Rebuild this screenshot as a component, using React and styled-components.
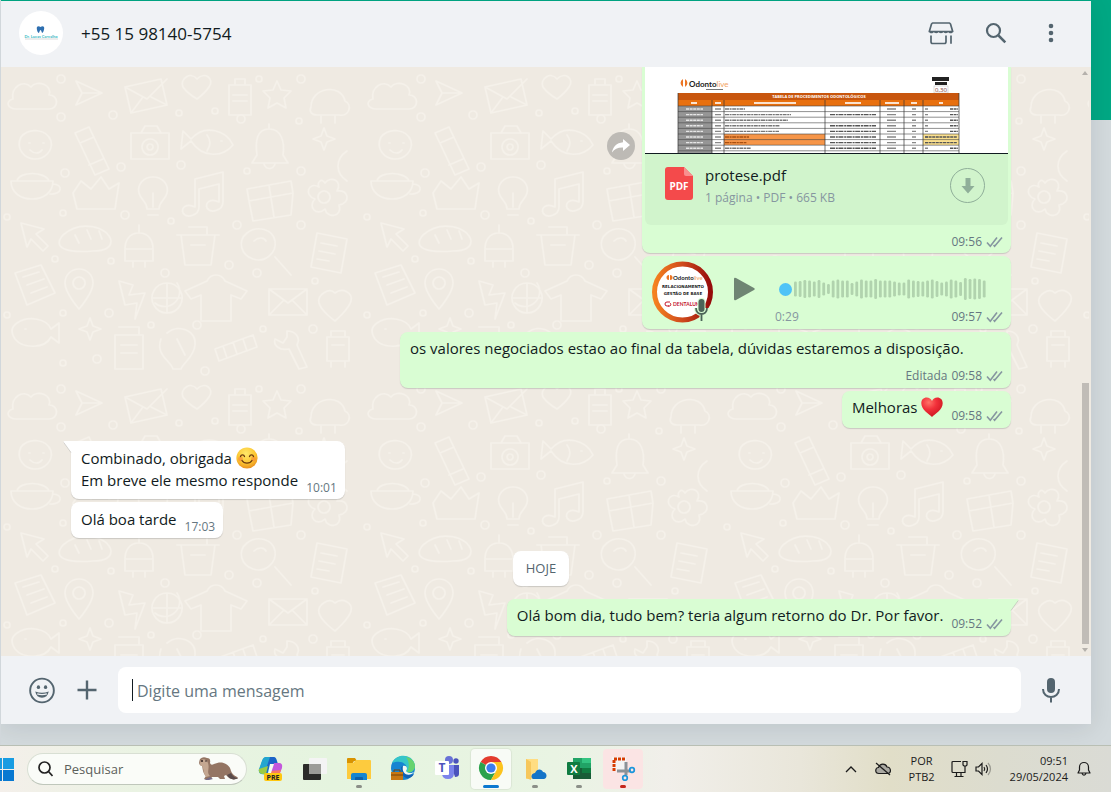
import React from "react";
import styled, { createGlobalStyle } from "styled-components";

const GlobalStyle = createGlobalStyle`
  * {
    box-sizing: border-box;
  }
  body {
    margin: 0;
    font-family: "Open Sans", "Noto Sans", sans-serif;
    color: #111b21;
  }
  button {
    background: none;
    border: 0;
    padding: 0;
    font: inherit;
    color: inherit;
    cursor: pointer;
  }
  svg {
    display: block;
  }
`;

const Desktop = styled.div`
  display: flex;
  flex-direction: column;
  height: 100vh;
`;

const Browser = styled.div`
  display: flex;
  flex: 1;
  min-height: 0;
  overflow: hidden;
  padding: 1px 20px 21px 0;
  border-left: 1px solid #d1d7db;
  background: linear-gradient(#00a884 120px, #d3dadd 120px);
`;

const Window = styled.main`
  display: flex;
  flex-direction: column;
  flex: 1;
  min-width: 0;
  background: #f0f2f5;
  box-shadow: 0 4px 24px rgba(11, 20, 26, 0.1);
`;

const Header = styled.header`
  display: flex;
  align-items: center;
  height: 66px;
  flex-shrink: 0;
  padding: 0 27px 2px 18px;
`;

const Title = styled.h1`
  flex: 1;
  margin: 2px 0 0 18px;
  font-size: 17px;
  font-weight: 400;
  line-height: 24px;
`;

const Actions = styled.div`
  display: flex;
  gap: 29px;
  color: #54656f;
`;

const IconButton = styled.button`
  display: flex;
  align-items: center;
  justify-content: center;
  width: 26px;
  height: 26px;
  color: #54656f;
`;

const Chat = styled.section`
  display: grid;
  grid-template-columns: 1fr 8px;
  flex: 1;
  min-height: 0;
  overflow: hidden;
  padding-right: 2px;
  background: #efeae2;
`;

const Wallpaper = styled.svg`
  grid-area: 1 / 1 / 2 / 3;
  width: 100%;
  height: 100%;
  min-height: 0;
`;

const Messages = styled.div`
  grid-area: 1 / 1;
  display: flex;
  flex-direction: column;
  align-items: flex-end;
  gap: 3px;
  min-height: 0;
  padding: 0 70px 20px;
`;

const ScrollBar = styled.div`
  grid-area: 1 / 2;
  display: flex;
  flex-direction: column;
  align-items: center;
  justify-content: space-between;
  padding: 3px 0;
`;

const ScrollRail = styled.div`
  display: flex;
  flex: 1;
  align-items: flex-end;
  margin: 2px 0 4px;
`;

const ScrollThumb = styled.div`
  width: 7px;
  height: 46%;
  background: #c0bcb7;
`;

const Bubble = styled.article`
  position: relative;
  display: flex;
  flex-direction: ${p => (p.stacked ? "column" : "row")};
  align-items: flex-end;
  gap: 8px;
  width: ${p => (p.stacked ? "65%" : "auto")};
  max-width: 65%;
  margin-top: ${p => (p.first ? "10px" : "0")};
  align-self: ${p => (p.incoming ? "flex-start" : "flex-end")};
  padding: 5px 8px 5px 10px;
  border-radius: 8px;
  border-top-left-radius: ${p => (p.first && p.incoming ? "0" : "8px")};
  border-top-right-radius: ${p => (p.first && !p.incoming ? "0" : "8px")};
  background: ${p => (p.incoming ? "#fff" : "#d9fdd3")};
  box-shadow: 0 1px 1px rgba(11, 20, 26, 0.16);
`;

const IncomingBubble = styled(Bubble)`
  padding: 6px 8px 4px 10px;
`;

const Text = styled.p`
  align-self: flex-start;
  margin: 0 0 ${p => p.bottom || "5px"};
  font-size: 15px;
  line-height: 22px;
`;

const Emoji = styled.svg`
  display: inline-block;
  width: 22px;
  height: 22px;
  vertical-align: top;
`;

const MetaRow = styled.div`
  display: flex;
  align-items: center;
  gap: 4px;
  flex-shrink: 0;
  color: #667781;
  font-size: 12px;
  line-height: 15px;
`;

const Tail = styled.svg`
  position: absolute;
  top: 0;
  left: ${p => (p.$incoming ? "-8px" : "auto")};
  right: ${p => (p.$incoming ? "auto" : "-8px")};
`;

const DocumentRow = styled.div`
  display: flex;
  align-items: center;
  gap: 7px;
`;

const Forward = styled.button`
  display: flex;
  align-items: center;
  justify-content: center;
  width: 28px;
  height: 28px;
  margin-bottom: 28px;
  border-radius: 50%;
  background: #bdbab5;
  color: #fff;
`;

const DocumentBubble = styled.article`
  width: 369px;
  padding: 0 3px 4px;
  border-radius: 0 0 8px 8px;
  background: #d9fdd3;
  box-shadow: 0 1px 1px rgba(11, 20, 26, 0.16);
`;

const Preview = styled.svg`
  width: 100%;
  height: 87px;
  background: #fff;
  border-bottom: 1px solid #111b21;
`;

const FileCard = styled.div`
  display: flex;
  align-items: flex-start;
  height: 71px;
  padding: 13px 23px 0 20px;
  border-radius: 0 0 6px 6px;
  background: #d1f4cc;
`;

const FileInfo = styled.div`
  flex: 1;
  margin-left: 12px;
`;

const FileName = styled.div`
  font-size: 15px;
  line-height: 20px;
  margin-top: -2px;
`;

const FileMeta = styled.div`
  margin-top: 5px;
  color: #8696a0;
  font-size: 12px;
  line-height: 16px;
`;

const Download = styled.button`
  display: flex;
  align-items: center;
  justify-content: center;
  width: 35px;
  height: 35px;
  margin-top: 1px;
  border: 1px solid #8fae99;
  border-radius: 50%;
  color: #8fae99;
`;

const DocumentFooter = styled.div`
  display: flex;
  justify-content: flex-end;
  padding: 9px 5px 0 0;
`;

const AudioBubble = styled(Bubble)`
  align-items: flex-start;
  gap: 20px;
  width: 369px;
`;

const PlayButton = styled.button`
  margin-top: 16px;
`;

const Track = styled.div`
  display: flex;
  flex-direction: column;
  flex: 1;
  justify-content: flex-end;
  gap: 8px;
  height: 63px;
`;

const WaveStack = styled.div`
  display: grid;
  padding: 0 15px 0 4px;

  & > * {
    grid-area: 1 / 1;
  }
`;

const Seek = styled.input`
  appearance: none;
  width: 100%;
  height: 24px;
  margin: 0;
  background: transparent;

  &::-webkit-slider-thumb {
    appearance: none;
    width: 13px;
    height: 13px;
    border-radius: 50%;
    background: #4fc3f7;
  }
`;

const TrackFooter = styled.div`
  display: flex;
  justify-content: space-between;
  color: #8696a0;
  font-size: 12px;
  line-height: 15px;
`;

const DayPill = styled.div`
  align-self: center;
  margin: 10px 0 0;
  padding: 0 13px;
  border-radius: 8px;
  background: #fff;
  box-shadow: 0 1px 1px rgba(11, 20, 26, 0.16);
  color: #54656f;
  font-size: 13px;
  line-height: 35px;
`;

const Composer = styled.footer`
  display: flex;
  align-items: center;
  height: 68px;
  flex-shrink: 0;
  gap: 19px;
  padding: 0 27px 0 28px;
`;

const InputBox = styled.label`
  display: flex;
  align-items: center;
  flex: 1;
  height: 46px;
  margin: 0 -2px 0 -1px;
  padding: 0 14px;
  border-radius: 8px;
  background: #fff;
`;

const Caret = styled.span`
  width: 1px;
  height: 22px;
  margin-right: 4px;
  background: #111b21;
`;

const MessageInput = styled.input`
  flex: 1;
  min-width: 0;
  border: 0;
  padding: 1px 0 0;
  outline: 0;
  background: none;
  font-family: inherit;
  font-size: 16px;

  &::placeholder {
    color: #667781;
    opacity: 1;
  }
`;

const TaskBar = styled.nav`
  display: flex;
  align-items: center;
  height: 47px;
  flex-shrink: 0;
  border-top: 1px solid #b9bfb4;
  background: linear-gradient(
    90deg,
    #f4efea 0%,
    #eaf3e3 12%,
    #e5f4df 30%,
    #e9f4e3 50%,
    #f1efea 60%,
    #e9e6da 72%,
    #e1dec8 80%,
    #dcdccf 90%,
    #dadbd5 100%
  );
`;

const StartButton = styled.button`
  width: 14px;
  margin-right: 13px;
`;

const SearchBox = styled.label`
  display: flex;
  align-items: center;
  width: 220px;
  height: 32px;
  margin-right: 4px;
  padding: 0 7px 0 10px;
  border: 1px solid #d8dfd3;
  border-bottom-color: #bfc7bb;
  border-radius: 16px;
  background: #fafcf8;
`;

const SearchInput = styled.input`
  flex: 1;
  min-width: 0;
  margin-left: 11px;
  padding: 0;
  border: 0;
  outline: 0;
  background: none;
  font-family: inherit;
  font-size: 13px;

  &::placeholder {
    color: #5c5f5b;
    opacity: 1;
  }
`;

const Apps = styled.div`
  display: flex;
  flex: 1;
  gap: 4px;
`;

const AppButton = styled.button`
  display: flex;
  flex-direction: column;
  align-items: center;
  justify-content: flex-end;
  gap: 4px;
  width: 40px;
  height: 40px;
  border-radius: 4px;
  background: ${p => p.fill || "none"};
  box-shadow: ${p => (p.active ? "0 0 1px 1px rgba(0, 0, 0, 0.06)" : "none")};

  &::after {
    content: "";
    width: ${p => (p.active ? "16px" : "6px")};
    height: 3px;
    margin-bottom: 1px;
    border-radius: 2px;
    background: ${p => p.mark || "transparent"};
  }
`;

const Tray = styled.div`
  display: flex;
  align-items: center;
  padding-right: 20px;
  color: #1b1b1b;
  font-size: 11px;
  line-height: 16px;
`;

const TrayItem = styled.button`
  display: flex;
  justify-content: center;
  margin-left: ${p => p.gap || "12px"};
  text-align: ${p => p.align || "center"};
`;

const Ticks = () => (
  <svg width="17" height="12" viewBox="0 0 17 12" fill="none" stroke="#8696a0" strokeWidth="1.6">
    <path d="M1 6.5l3.3 3.7L11 1.5M7.6 9l1 1.2L16 1.5" />
  </svg>
);

const Meta = ({ time, edited, received }) => (
  <MetaRow>
    {edited && <span>Editada</span>}
    <time>{time}</time>
    {!received && <Ticks />}
  </MetaRow>
);

const Heart = () => (
  <Emoji viewBox="0 0 22 22" role="img" aria-label="coração">
    <defs>
      <radialGradient id="heart" cx=".35" cy=".25" r=".8">
        <stop offset="0" stopColor="#ff7468" />
        <stop offset=".45" stopColor="#f2303a" />
        <stop offset="1" stopColor="#c9141f" />
      </radialGradient>
    </defs>
    <path
      d="M11 21C8 17.800.3 13.800.3 7.200.3 3.800 2.600 1.600 5.700 1.600c2.500 0 4.300 1.300 5.300 3.500 1-2.200 2.800-3.500 5.300-3.500 3.100 0 5.400 2.200 5.400 5.600C21.700 13.800 14 17.800 11 21z"
      fill="url(#heart)"
    />
  </Emoji>
);

const Smile = () => (
  <Emoji viewBox="0 0 22 22" role="img" aria-label="sorriso">
    <defs>
      <radialGradient id="smile" cx=".45" cy=".3" r=".75">
        <stop offset="0" stopColor="#ffe96b" />
        <stop offset=".6" stopColor="#fcc531" />
        <stop offset="1" stopColor="#e5851b" />
      </radialGradient>
    </defs>
    <circle cx="11" cy="11" r="10.600" fill="url(#smile)" />
    <circle cx="4.500" cy="12" r="2.400" fill="#f5803c" opacity=".55" />
    <circle cx="17.500" cy="12" r="2.400" fill="#f5803c" opacity=".55" />
    <path
      d="M4.500 9.500c.6-2.200 3.400-2.200 4 0M13.500 9.500c.6-2.200 3.400-2.200 4 0M6 13.500c2 3.600 8 3.600 10 0"
      fill="none"
      stroke="#6b3a10"
      strokeWidth="1.300"
      strokeLinecap="round"
    />
  </Emoji>
);

const BubbleTail = ({ incoming }) => (
  <Tail $incoming={incoming} width="9" height="13" viewBox="0 0 9 13">
    <path
      d={incoming ? "M9 0H1.500Q0 0 .8 1.500L9 12.500z" : "M0 0H7.500Q9 0 8.200 1.500L0 12.500z"}
      fill={incoming ? "#fff" : "#d9fdd3"}
    />
    <path
      d={incoming ? "M.8 1.500L8 11.500" : "M8.200 1.500L1 11.500"}
      fill="none"
      stroke="#0b141a"
      strokeOpacity=".14"
    />
  </Tail>
);

const Doodles = () => (
  <Wallpaper aria-hidden="true">
    <defs>
      <pattern id="doodles" width="360" height="310" patternUnits="userSpaceOnUse">
        <g fill="none" stroke="#f5f1ea" strokeWidth="1.700" strokeLinecap="round" strokeLinejoin="round">
          <path d="M12 32c-2-12 10-20 18-12 6-8 22-2 18 8 10 0 10 14 0 14H16c-10 0-12-8-4-10z" />
          <path d="M75 14l26 12-26 12 6-12zM81 26h20" />
          <path d="M124 20l36-8 6 26-36 8zM124 20l22 12 20-20M130 46l12-16M166 38l-16-8" />
          <path d="M196 12c8-8 18 0 12 8-4 6-12 12-12 12s-10-6-14-12c-4-8 8-16 14-8z" />
          <path d="M228 18h22v30h-22zM234 18v-6h10v6M232 28h14M232 34h14" />
          <path d="M276 14l4 9 10 1-7 7 2 10-9-5-9 5 2-10-7-7 10-1z" />
          <path d="M310 40c0-20 30-24 34-6 8 4 4 16-6 14h-22c-6 0-8-4-6-8zM320 48v8M334 48v8" />
          <path d="M20 70c8-10 26-8 30 4 2 10-6 18-16 18S14 82 20 70zM28 76h1M42 76h1M29 83c4 4 9 4 12 0" />
          <path d="M74 66l14-6 20 42-14 6zM79 76l14-6M88 98l14-6" />
          <path d="M130 66h38v26h-38zM140 66l4-7h12l4 7M149 72a8 8 0 1 0 .1 0zM149 77a3 3 0 1 0 .1 0" />
          <path d="M190 72c14-16 36-8 42 6-10 12-30 14-42-4l-10 8 2-18zM220 74h1M206 68c4 5 4 10 0 16" />
          <path d="M268 62c-12 0-14 12-12 26l-5 8h36l-5-8c2-14-2-26-14-26zM263 97c2 6 9 6 11 0M268 62v-5" />
          <path d="M312 72l8 3 3 8 3-8 8-3-8-3-3-8-3 8z" />
          <path d="M346 84c-12 8-12 22 0 30" />
          <path d="M10 114h42c0 12-10 18-21 18S10 126 10 114zM16 114c2-10 28-10 32 0M52 117c10 0 10 11-3 10" />
          <path d="M72 126l8-12 10 8 10-12 8 12 10-6-4 26H76z" />
          <path d="M152 110c10 0 16 8 14 16-2 8-8 8-8 16h-12c0-8-6-8-8-16-2-8 4-16 14-16zM147 148h10M152 126v14" />
          <path d="M194 112v28c-8-4-14 0-12 6 4 6 16 2 16-6v-18l20-5v18c-8-4-14 0-12 6 4 6 16 2 16-6v-30z" />
          <path d="M246 122l44-8 2 12-44 8zM248 134l4 20 38-6 2-22M268 118l5 32" />
          <path d="M324 116c6-8 18-2 12 8 12-2 14 12 2 14 4 12-12 14-14 4-8 8-18-2-10-10-12-4-6-18 4-12-2-4 2-10 6-4zM323 124a6 6 0 1 0 .1 0" />
          <path d="M20 156l6 24 4-8 12 12 5-5-12-12 8-5z" />
          <path d="M62 168c18-16 46-8 48 6 0 8-8 10-18 10-24 2-42-2-30-16zM74 168l4 8M86 163l4 9M98 164l3 8" />
          <path d="M138 166c-10 0-14 8-14 16h28c0-8-4-16-14-16zM138 166v-8M124 182v12h28v-12M132 194v6M144 194v6" />
          <path d="M180 168h34l-4 30h-26zM176 168h42M188 160h18v8M190 178h14" />
          <path d="M246 166c10-8 26-4 28 8s-10 22-22 18-16-18-6-26zM274 190l16 18M253 174c4-4 10-4 12 0" />
          <path d="M316 166l30 6-6 34-30-6zM320 176l16 3M318 184l16 3M316 192l12 2" />
          <path d="M14 206l26-8 14 28-28 12zM22 210l16-5M26 218l17-6M30 226l16-6" />
          <path d="M78 202c8 0 14 6 14 14 0 10-14 26-14 26s-14-16-14-26c0-8 6-14 14-14zM78 210a6 6 0 1 0 .1 0" />
          <path d="M118 214l14 4-4 10 16-2-10 26 2-16-12 2z" />
          <path d="M166 216a15 15 0 1 0 .1 0zM176 216a15 15 0 0 1-22 20M151 231h30M166 216v30" />
          <path d="M206 214c4-8 14-8 18 0l22 10-6 8-10-4v26h-30v-26l-10 4-6-8z" />
          <path d="M268 222h38v26h-38zM268 222l19 14 19-14M268 248l14-14M306 248l-14-14" />
          <path d="M334 226c8-6 18 0 16 8s-16 20-16 20-14-10-16-18 10-16 16-10z" />
          <path d="M16 256c12-8 30-4 34 6l8-6v20l-8-6c-6 12-28 12-36 2-4-6-4-12 2-16zM24 262h1" />
          <path d="M78 262l8 3 3 8 3-8 8-3-8-3-3-8-3 8z" />
          <path d="M114 268h28v34h-28zM118 260h20v8M120 278h16M120 286h16" />
          <path d="M166 266c12-10 30-2 28 12-1 12-12 18-14 24h-8c-2-8-18-14-12-30M176 272l8 16" />
          <path d="M214 282l38-14 4 12-38 14zM222 279l4 12M232 275l4 12M242 272l4 12" />
          <path d="M286 264c8 0 14 6 10 14l10 22-8 2-10-20c-10 2-16-4-14-10l8 4 4-6z" />
          <path d="M326 270h22v24h-22zM330 270v-6h14v6M330 294v6M344 294v6M331 278h12" />
          <g>
            {[
              [60, 12], [112, 48], [178, 46], [214, 44], [258, 12], [300, 12], [60, 50], [64, 106], [120, 100],
              [180, 98], [240, 52], [246, 104], [298, 54], [300, 104], [236, 158], [170, 154], [124, 148], [62, 146],
              [6, 150], [110, 194], [164, 206], [228, 198], [300, 158], [54, 192], [108, 246], [196, 258], [256, 206],
              [314, 214], [62, 246], [150, 258], [262, 262], [312, 262], [62, 296], [204, 304], [96, 292], [6, 248]
            ].map(([cx, cy]) => (
              <circle key={cx + "-" + cy} cx={cx} cy={cy} r={cx % 4 ? 3 : 4} />
            ))}
          </g>
        </g>
      </pattern>
    </defs>
    <rect width="100%" height="100%" fill="url(#doodles)" />
  </Wallpaper>
);

const columns = [67, 79, 180, 235, 259, 278];
const priceRows = [0, 1, 2, 3, 4, 5, 6, 7, 8];

const PricePreview = () => (
  <Preview viewBox="0 0 363 86" preserveAspectRatio="xMidYMin slice" role="img" aria-label="Tabela de procedimentos">
    <g fontFamily="Open Sans">
      <path d="M38 12a4.500 4.500 0 0 0 0 8zM40 12a4.500 4.500 0 0 1 0 8z" fill="#ec7625" />
      <text x="44" y="20" fontSize="8" fontWeight="700" fontFamily="Lato" fill="#222">
        Odonto<tspan fill="#f3a261" fontWeight="400">live</tspan>
      </text>
      <rect x="61" y="22" width="17" height="1" fill="#777" />
      <rect x="287" y="10" width="17" height="4" fill="#222" />
      <rect x="290" y="15" width="12" height="3" fill="#222" />
      <rect x="289" y="19" width="14" height="7" fill="#fff" stroke="#bbb" strokeWidth=".5" />
      <text x="296" y="25" fontSize="6" textAnchor="middle" fill="#733">0,30</text>
      <rect x="33" y="26" width="281" height="7" fill="#c8560e" />
      <text x="174" y="31" fontSize="4" fontWeight="700" textAnchor="middle" fill="#fff">
        TABELA DE PROCEDIMENTOS ODONTOLÓGICOS
      </text>
      <rect x="33" y="33" width="281" height="6" fill="#e8700f" />
      <g fill="#fbe3cf">
        <rect x="46" y="35" width="6" height="2" />
        <rect x="70" y="35" width="6" height="2" />
        <rect x="109" y="35" width="42" height="2" />
        <rect x="200" y="35" width="16" height="2" />
        <rect x="240" y="35" width="14" height="2" />
        <rect x="266" y="35" width="6" height="2" />
        <rect x="294" y="35" width="4" height="2" />
      </g>
      <rect x="33" y="39" width="34" height="47" fill="#969696" />
      <rect x="79" y="67" width="101" height="11" fill="#f69548" />
      <rect x="278" y="67" width="36" height="11" fill="#fbe08e" />
      {priceRows.map(i => {
        const y = 39 + i * 5.6;
        const wide = [20, 66, 63, 55, 54, 24, 22, 26, 0][i];
        return (
          <g key={i} fill="none" strokeWidth="1.400">
            <path d={`M33 ${y}H314`} stroke="#444" strokeWidth=".6" />
            <path d={`M41 ${y + 3}h17`} stroke="#e6e6e6" strokeDasharray="3 .6" />
            <path d={`M70 ${y + 3}h6M242 ${y + 3}h9M267 ${y + 3}h4M280 ${y + 3}h3`} stroke="#888" />
            <path d={`M80 ${y + 3}h${wide}`} stroke={i > 4 && i < 7 ? "#a84f10" : "#777"} strokeDasharray="4 .6 2 .6" />
            {(i === 1 || i > 2) && <path d={`M185 ${y + 3}h46`} stroke="#555" strokeDasharray="5 .8 2 .6" />}
            <path
              d={i === 5 || i === 6 ? `M280 ${y + 3}h32` : `M305 ${y + 3}h8`}
              stroke="#555"
              strokeDasharray="3 .6"
            />
          </g>
        );
      })}
      {columns.map(x => (
        <path key={x} d={`M${x} 33V86`} stroke="#333" strokeWidth=".7" />
      ))}
      <path d="M33 26V86M314 26V86" stroke="#333" strokeWidth=".7" />
    </g>
  </Preview>
);

const bars = [
  15, 16, 18, 17, 15, 18, 13, 10, 17, 19, 17, 17, 12, 15, 19, 17, 17, 20, 17, 17, 17, 15, 13, 13, 19, 17, 16, 15, 17,
  19, 16, 13, 15, 19, 17, 14, 22, 20, 21, 20, 17
];

const Waveform = () => (
  <svg width="208" height="24" viewBox="0 0 208 24" aria-hidden="true">
    {bars.map((h, i) => (
      <rect key={i} x={15 + i * 4.72} y={12 - h / 2} width="2.800" height={h} rx="1.300" fill="#b1d3ae" />
    ))}
  </svg>
);

const VoiceAvatar = () => (
  <svg width="62" height="62" viewBox="0 0 62 62" role="img" aria-label="Odontolive">
    <defs>
      <linearGradient id="ring">
        <stop offset="0" stopColor="#f58220" />
        <stop offset=".5" stopColor="#cf4a1c" />
        <stop offset="1" stopColor="#960b0b" />
      </linearGradient>
    </defs>
    <circle cx="30.500" cy="31" r="28" fill="#fff" stroke="url(#ring)" strokeWidth="5" />
    <path d="M17 14a2.500 2.500 0 0 0 0 5zM18 14a2.500 2.500 0 0 1 0 5z" fill="#ec7625" />
    <text x="21" y="19" fontSize="6" fontWeight="700" fontFamily="Lato" fill="#222">
      Odonto<tspan fill="#f3a261" fontWeight="400">live</tspan>
    </text>
    <g fontFamily="DejaVu Sans" fontWeight="700" fontSize="4" textAnchor="middle" fill="#222">
      <text x="31" y="27">RELACIONAMENTO</text>
      <text x="31" y="34">GESTÃO DE BASE</text>
    </g>
    <path d="M18 41h-3a1.800 1.800 0 0 0 0 4h2M16 45h2a1.800 1.800 0 0 0 0-3" fill="none" stroke="#c4142b" />
    <text x="21" y="45" fontSize="5" fontWeight="700" fontFamily="Lato" fill="#c4142b">DENTALUNI</text>
    <path d="M44 47c0 8 11 8 11 0M49.500 53v7" fill="none" stroke="#d9fdd3" strokeWidth="4" />
    <rect x="45.500" y="37" width="8" height="15" rx="4" fill="#d9fdd3" />
    <path d="M44 47c0 8 11 8 11 0M49.500 53v7" fill="none" stroke="#4c6458" strokeWidth="1.800" />
    <rect x="46.500" y="38" width="6" height="13" rx="3" fill="#4c6458" />
  </svg>
);

const ContactAvatar = () => (
  <svg width="44" height="44" viewBox="0 0 44 44" role="img" aria-label="Dr. Lucas Carvalho">
    <circle cx="22" cy="22" r="22" fill="#fff" />
    <path
      d="M18 16c1-1.500 2.500-.5 3.500 0 1-.5 2.500-1.500 3.500 0 .8 2-1 6-1.700 6S22.500 19 21.500 19s-1 3-1.800 3S17.200 18 18 16z"
      fill="#2e6fb0"
    />
    <rect x="6" y="27" width="33" height="2" fill="#ececec" />
    <text x="22" y="27" fontSize="4" fontWeight="900" fontFamily="Lato" textAnchor="middle" fill="#4cbfc9">
      Dr. Lucas Carvalho
    </text>
  </svg>
);

const MicIcon = () => (
  <svg width="20" height="26" viewBox="0 0 20 26">
    <rect x="6" y="1" width="8" height="15" rx="4" fill="currentColor" />
    <path d="M2 12c0 10.500 16 10.500 16 0M10 20v5.500" fill="none" stroke="currentColor" strokeWidth="2" />
  </svg>
);

const HeaderActions = () => (
  <Actions>
    <IconButton aria-label="Catálogo">
      <svg width="26" height="24" viewBox="0 0 26 24" fill="none" stroke="currentColor" strokeWidth="1.700">
        <path d="M4.500 2h17l1 1 2.200 7.500H1.300L3.500 3z" strokeLinejoin="round" />
        <path
          d="M1 10c0 3 4.800 3 4.800.2 0 2.600 4.800 2.600 4.800 0 0 2.600 4.800 2.600 4.800 0 0 2.600 4.800 2.600 4.800 0 0 2.800 4.900 2.800 4.900-.2z"
          fill="currentColor"
          stroke="none"
        />
        <path d="M3 14.500v6.300q0 1.700 1.700 1.700h11.600q1.700 0 1.700-1.700v-6.300M23 14.500v8.300" />
      </svg>
    </IconButton>
    <IconButton aria-label="Pesquisar">
      <svg width="24" height="24" viewBox="0 0 24 24" fill="none" stroke="currentColor">
        <circle cx="9.500" cy="9.500" r="6.500" strokeWidth="2.200" />
        <path d="M14.500 14.500l6.800 6.800" strokeWidth="2.500" />
      </svg>
    </IconButton>
    <IconButton aria-label="Mais opções">
      <svg width="6" height="20" viewBox="0 0 6 20" fill="currentColor">
        <circle cx="3" cy="3" r="2.300" />
        <circle cx="3" cy="10" r="2.300" />
        <circle cx="3" cy="17" r="2.300" />
      </svg>
    </IconButton>
  </Actions>
);

const DocumentMessage = () => (
  <DocumentRow>
    <Forward aria-label="Encaminhar">
      <svg width="20" height="16" viewBox="0 0 20 16" fill="currentColor">
        <path d="M12 1l7 6-7 6V9.500C7 9.300 3.500 10.800 1 14.500 1.800 9 5.500 5 12 4.300z" />
      </svg>
    </Forward>
    <DocumentBubble>
      <PricePreview />
      <FileCard>
        <svg width="28" height="33" viewBox="0 0 28 33" role="img" aria-label="PDF">
          <path d="M3 0h16l9 9v21q0 3-3 3H3q-3 0-3-3V3q0-3 3-3z" fill="#f44a4b" />
          <path d="M19 0l9 9h-7q-2 0-2-2z" fill="#f98f8e" />
          <text x="14" y="23" fontSize="10" fontWeight="700" fontFamily="Open Sans" textAnchor="middle" fill="#fff">
            PDF
          </text>
        </svg>
        <FileInfo>
          <FileName>protese.pdf</FileName>
          <FileMeta>1 página • PDF • 665 KB</FileMeta>
        </FileInfo>
        <Download aria-label="Baixar protese.pdf">
          <svg width="14" height="16" viewBox="0 0 14 16" fill="currentColor">
            <path d="M4.500 0h5v8H13.500L7 15.500.5 8H4.500z" />
          </svg>
        </Download>
      </FileCard>
      <DocumentFooter>
        <Meta time="09:56" />
      </DocumentFooter>
    </DocumentBubble>
  </DocumentRow>
);

const AudioMessage = () => (
  <AudioBubble>
    <VoiceAvatar />
    <PlayButton aria-label="Reproduzir">
      <svg width="21" height="24" viewBox="0 0 21 24">
        <path d="M0 2Q0 0 2 1l18 10q1.500 1 0 2L2 23q-2 1-2-1z" fill="#6f8573" />
      </svg>
    </PlayButton>
    <Track>
      <WaveStack>
        <Waveform />
        <Seek type="range" min="0" max="29" defaultValue="0" aria-label="Posição do áudio" />
      </WaveStack>
      <TrackFooter>
        <span>0:29</span>
        <Meta time="09:57" />
      </TrackFooter>
    </Track>
  </AudioBubble>
);

const apps = [
  {
    name: "Copilot",
    icon: (
      <>
        <path d="M7 3h7l4 1-4 12-4 4-7-1q-3-1-2-5L4 6q1-3 3-3z" fill="#22a5c8" />
        <path d="M8 2h8q2 0 3 4l1 3h-6l-2 1-3 9-5-4L5 5q1-3 3-3z" fill="#1b64c8" />
        <path d="M8 2h4l-4 12-7 2L4 6q1-4 4-4z" fill="#23a6cf" />
        <path d="M1 14l9-3-2 8H4q-4-1-3-5z" fill="#9bcb45" />
        <path d="M16 8h5q4 0 3 5l-2 5q-1 3-4 3h-7z" fill="#c457dc" />
        <path d="M13 16l10-1-2 5-9 1z" fill="#f47a64" />
        <path d="M12 9h4l-3 9h-3z" fill="#f5faf2" />
        <rect x="6" y="18" width="18" height="8" rx="2" fill="#ffc70f" />
        <text x="15" y="25" fontSize="7" fontWeight="700" textAnchor="middle" fill="#222">PRE</text>
      </>
    )
  },
  {
    name: "Visão de tarefas",
    icon: (
      <>
        <rect x="1" y="9" width="18" height="16" rx="1" fill="#2b2b29" />
        <rect x="7" y="3" width="18" height="16" rx="1" fill="#f4f4f4" />
        <path d="M7 9h12v10H7z" fill="#9c9c98" />
      </>
    )
  },
  {
    name: "Explorador de Arquivos",
    mark: "#8b8f88",
    icon: (
      <>
        <path d="M1 4q0-1 1-1h7l2 3h-3l-2 3H1z" fill="#d99300" />
        <path d="M1 8h6l3-3h14q1 0 1 1v18H1z" fill="#fdcb3e" />
        <path d="M5 25v-5q0-2 2-2h12q2 0 2 2v5z" fill="#1585d0" />
        <path d="M9 25v-2q0-1 1-1h6q1 0 1 1v2z" fill="#0c5fa8" />
      </>
    )
  },
  {
    name: "Edge",
    icon: (
      <>
        <circle cx="13" cy="13" r="12" fill="#1684d2" />
        <path d="M2 8C7-3 24-1 25 11c0 6-6 8-10 6 5-6-2-13-13-9z" fill="#36c5c9" />
        <path d="M16 2c6 1 9 5 9 10-1 4-4 6-8 5 3-5 2-11-1-15z" fill="#66d36e" />
        <path d="M11 12c4-3 7 3 4 6 3 3 6 2 9 1-3 6-13 7-13-7z" fill="#1261b4" />
        <path d="M13 11c4-1 5 3 3 5 2 3 6 2 8 1-4 5-13 3-11-6z" fill="#f3f8f2" />
        <path d="M1 17h12v8H1z" fill="#c77814" />
        <path d="M4 17v-2h6v2M1 20h12" stroke="#74420a" fill="none" />
      </>
    )
  },
  {
    name: "Teams",
    icon: (
      <>
        <circle cx="15" cy="5" r="4" fill="#6871d6" />
        <circle cx="22" cy="6" r="2.700" fill="#4b53bc" />
        <path d="M17 10h8v9q0 3-4 3z" fill="#4b53bc" />
        <path d="M8 10h12v8q0 6-6 6t-6-6z" fill="#7b83eb" />
        <rect x="1" y="6" width="14" height="14" rx="1" fill="#fff" />
        <text x="8" y="17" fontSize="12" fontWeight="700" textAnchor="middle" fill="#4b53bc">T</text>
      </>
    )
  },
  {
    name: "Chrome",
    active: true,
    fill: "#f8fbf6",
    mark: "#0b78d0",
    icon: (
      <>
        <path d="M13 13L2.600 7A12 12 0 0 1 23.400 7z" fill="#e33b2e" />
        <path d="M13 13L2.600 7A12 12 0 0 0 13 25l5-9z" fill="#2ba24c" />
        <path d="M13 7h10.400A12 12 0 0 1 13 25l5.200-9z" fill="#fcc31e" />
        <circle cx="13" cy="13" r="6" fill="#fff" />
        <circle cx="13" cy="13" r="4.600" fill="#3b7ded" />
      </>
    )
  },
  {
    name: "OneDrive",
    mark: "#8b8f88",
    icon: (
      <>
        <path d="M4 4h12v20H4z" fill="#ffdd82" />
        <path d="M4 4l5 3v18l-5-2z" fill="#f6c75c" />
        <path d="M11 24c-3-2-1-6 2-6 2-5 7-4 8-1 4 0 5 6 1 7z" fill="#1474c8" />
      </>
    )
  },
  {
    name: "Excel",
    mark: "#8b8f88",
    icon: (
      <>
        <path d="M7 3h18v21H7z" fill="#21a366" />
        <path d="M16 3h9v5h-9z" fill="#33c481" />
        <path d="M7 13h18v11H7z" fill="#185c37" />
        <path d="M16 13h9v5h-9z" fill="#107c41" />
        <rect x="1" y="7" width="13" height="13" rx="1" fill="#107c41" />
        <text x="8" y="18" fontSize="11" fontWeight="700" textAnchor="middle" fill="#fff">X</text>
      </>
    )
  },
  {
    name: "Ferramenta de Captura",
    fill: "#fbe4e4",
    mark: "#c5261c",
    icon: (
      <>
        <rect x="2" y="2" width="14" height="14" fill="#f4f4f4" />
        <path d="M4 16V4h12" fill="none" stroke="#d83b01" strokeWidth="3" strokeDasharray="3 1" />
        <path d="M16 7v9M7 16h14M16 15v5" fill="none" stroke="#8c9298" strokeWidth="3" />
        <circle cx="22" cy="15" r="2.300" fill="none" stroke="#1b96dc" strokeWidth="1.700" />
        <circle cx="15" cy="23" r="2.300" fill="none" stroke="#1b96dc" strokeWidth="1.700" />
      </>
    )
  }
];

const Otter = () => (
  <svg width="42" height="26" viewBox="0 0 42 26" aria-hidden="true">
    <path
      d="M3 3q3-3 7-1 4 0 3 5 1 3 4 1c8-4 16 0 17 7 2 5 6 5 7 7-4 3-9 1-12-3l-2 1 1 3h-5l-2-2h-6l-1 2H7l2-3c-4-4-3-8-4-10-4-1-3-4-2-7z"
      fill="#947563"
    />
    <path d="M4 4c3-2 6 0 7 3 2 6-2 9 2 13l-4 1c-3-4-2-8-4-11-3-1-2-4-1-6z" fill="#c4a791" />
    <path d="M34 17c2 4 5 5 7 5-4 3-9 1-11-3z" fill="#594b4b" />
    <circle cx="5" cy="5" r="1" fill="#2e2020" />
    <circle cx="9" cy="5" r=".8" fill="#2e2020" />
    <path d="M7 24l6-3 3 2-4 1z" fill="#766d86" />
  </svg>
);

const Dock = () => (
  <TaskBar>
    <StartButton aria-label="Iniciar">
      <svg width="14" height="23" viewBox="0 0 14 23">
        <path d="M0 0h2v11H0zM3 0h11v11H3z" fill="#189ce2" />
        <path d="M0 12h2v11H0zM3 12h11v11H3z" fill="#0878d1" />
      </svg>
    </StartButton>
    <SearchBox>
      <svg width="15" height="16" viewBox="0 0 15 16" fill="none" stroke="#222" strokeWidth="1.700">
        <circle cx="6.500" cy="6.500" r="5.500" />
        <path d="M10.500 10.500l4 4.500" />
      </svg>
      <SearchInput placeholder="Pesquisar" aria-label="Pesquisar no Windows" />
      <Otter />
    </SearchBox>
    <Apps>
      {apps.map(app => (
        <AppButton key={app.name} aria-label={app.name} fill={app.fill} mark={app.mark} active={app.active}>
          <svg width="26" height="26" viewBox="0 0 26 26" fontFamily="Open Sans">
            {app.icon}
          </svg>
        </AppButton>
      ))}
    </Apps>
    <Tray>
      <TrayItem aria-label="Mostrar ícones ocultos">
        <svg width="12" height="8" viewBox="0 0 12 8" fill="none" stroke="currentColor" strokeWidth="1.300">
          <path d="M1 7l5-5 5 5" />
        </svg>
      </TrayItem>
      <TrayItem gap="18px" aria-label="OneDrive desconectado">
        <svg width="16" height="14" viewBox="0 0 16 14" stroke="currentColor" strokeWidth="1.200">
          <path d="M4 11.500C-.5 11.500 0 5.500 3.500 5.500 5 1 10.500 1 12 5c4.500.5 4.500 6.500.5 6.500z" fill="#aaa9a2" />
          <path d="M1 1l14 12" />
        </svg>
      </TrayItem>
      <TrayItem gap="18px" aria-label="Idioma">
        <span>
          POR
          <br />
          PTB2
        </span>
      </TrayItem>
      <TrayItem gap="16px" aria-label="Rede">
        <svg width="17" height="18" viewBox="0 0 17 18" fill="none" stroke="currentColor" strokeWidth="1.200">
          <path d="M10 1.500H2Q1 1.500 1 2.500v9q0 1 1 1h12V8M5.500 12.500V16M10 12.500V16M3.500 16.500h9M12 1.500h4V5l-1 1h-2l-1-1zM14 6v6" />
        </svg>
      </TrayItem>
      <TrayItem gap="7px" aria-label="Volume">
        <svg width="17" height="14" viewBox="0 0 17 14" fill="none" stroke="currentColor" strokeWidth="1.200">
          <path d="M1 5h2.500L7 1.500v11L3.500 9H1zM9 5q1.500 2 0 4M11 3q3 4 0 8" />
          <path d="M13 1q5 6 0 12" opacity=".35" />
        </svg>
      </TrayItem>
      <TrayItem gap="18px" align="right" aria-label="Data e hora">
        <span>
          09:51
          <br />
          29/05/2024
        </span>
      </TrayItem>
      <TrayItem gap="9px" aria-label="Notificações">
        <svg width="14" height="16" viewBox="0 0 14 16" fill="none" stroke="currentColor" strokeWidth="1.200">
          <path d="M1 12h12l-1.500-3V6c0-6-9-6-9 0v3zM5 12.500q2 3.500 4 0" strokeLinejoin="round" />
        </svg>
      </TrayItem>
    </Tray>
  </TaskBar>
);

const App = () => (
  <Desktop>
    <GlobalStyle />
    <Browser>
      <Window>
        <Header>
          <ContactAvatar />
          <Title>+55 15 98140-5754</Title>
          <HeaderActions />
        </Header>
        <Chat>
          <Doodles />
          <Messages>
            <DocumentMessage />
            <AudioMessage />
            <Bubble stacked>
              <Text bottom="1px">os valores negociados estao ao final da tabela, dúvidas estaremos a disposição.</Text>
              <Meta time="09:58" edited />
            </Bubble>
            <Bubble>
              <Text>
                Melhoras <Heart />
              </Text>
              <Meta time="09:58" />
            </Bubble>
            <IncomingBubble incoming first>
              <BubbleTail incoming />
              <Text bottom="4px">
                Combinado, obrigada <Smile />
                <br />
                Em breve ele mesmo responde
              </Text>
              <Meta time="10:01" received />
            </IncomingBubble>
            <IncomingBubble incoming>
              <Text bottom="4px">Olá boa tarde</Text>
              <Meta time="17:03" received />
            </IncomingBubble>
            <DayPill>HOJE</DayPill>
            <Bubble first>
              <BubbleTail />
              <Text>Olá bom dia, tudo bem? teria algum retorno do Dr. Por favor.</Text>
              <Meta time="09:52" />
            </Bubble>
          </Messages>
          <ScrollBar aria-hidden="true">
            <svg width="6" height="5" viewBox="0 0 6 5">
              <path d="M0 5l3-4 3 4z" fill="#b5b1ac" />
            </svg>
            <ScrollRail>
              <ScrollThumb />
            </ScrollRail>
            <svg width="6" height="5" viewBox="0 0 6 5">
              <path d="M0 0l3 4 3-4z" fill="#b5b1ac" />
            </svg>
          </ScrollBar>
        </Chat>
        <Composer>
          <IconButton aria-label="Emojis">
            <svg width="27" height="27" viewBox="0 0 27 27" fill="none" stroke="currentColor">
              <circle cx="13.500" cy="13.500" r="12.300" strokeWidth="2" />
              <ellipse cx="9.800" cy="10" rx="1.700" ry="2" fill="currentColor" stroke="none" />
              <ellipse cx="17.200" cy="10" rx="1.700" ry="2" fill="currentColor" stroke="none" />
              <path d="M6.500 14.500q7 2.600 14 0-1.300 6.500-7 6.500t-7-6.500z" fill="currentColor" stroke="none" />
              <path d="M8.500 17q5 1.500 10 0" stroke="#f0f2f5" strokeWidth="1.300" />
            </svg>
          </IconButton>
          <IconButton aria-label="Anexar">
            <svg width="20" height="20" viewBox="0 0 20 20" stroke="currentColor" strokeWidth="2.400">
              <path d="M10 .5v19M.5 10h19" />
            </svg>
          </IconButton>
          <InputBox>
            <Caret />
            <MessageInput placeholder="Digite uma mensagem" aria-label="Digite uma mensagem" />
          </InputBox>
          <IconButton aria-label="Mensagem de voz">
            <MicIcon />
          </IconButton>
        </Composer>
      </Window>
    </Browser>
    <Dock />
  </Desktop>
);

export default App;
